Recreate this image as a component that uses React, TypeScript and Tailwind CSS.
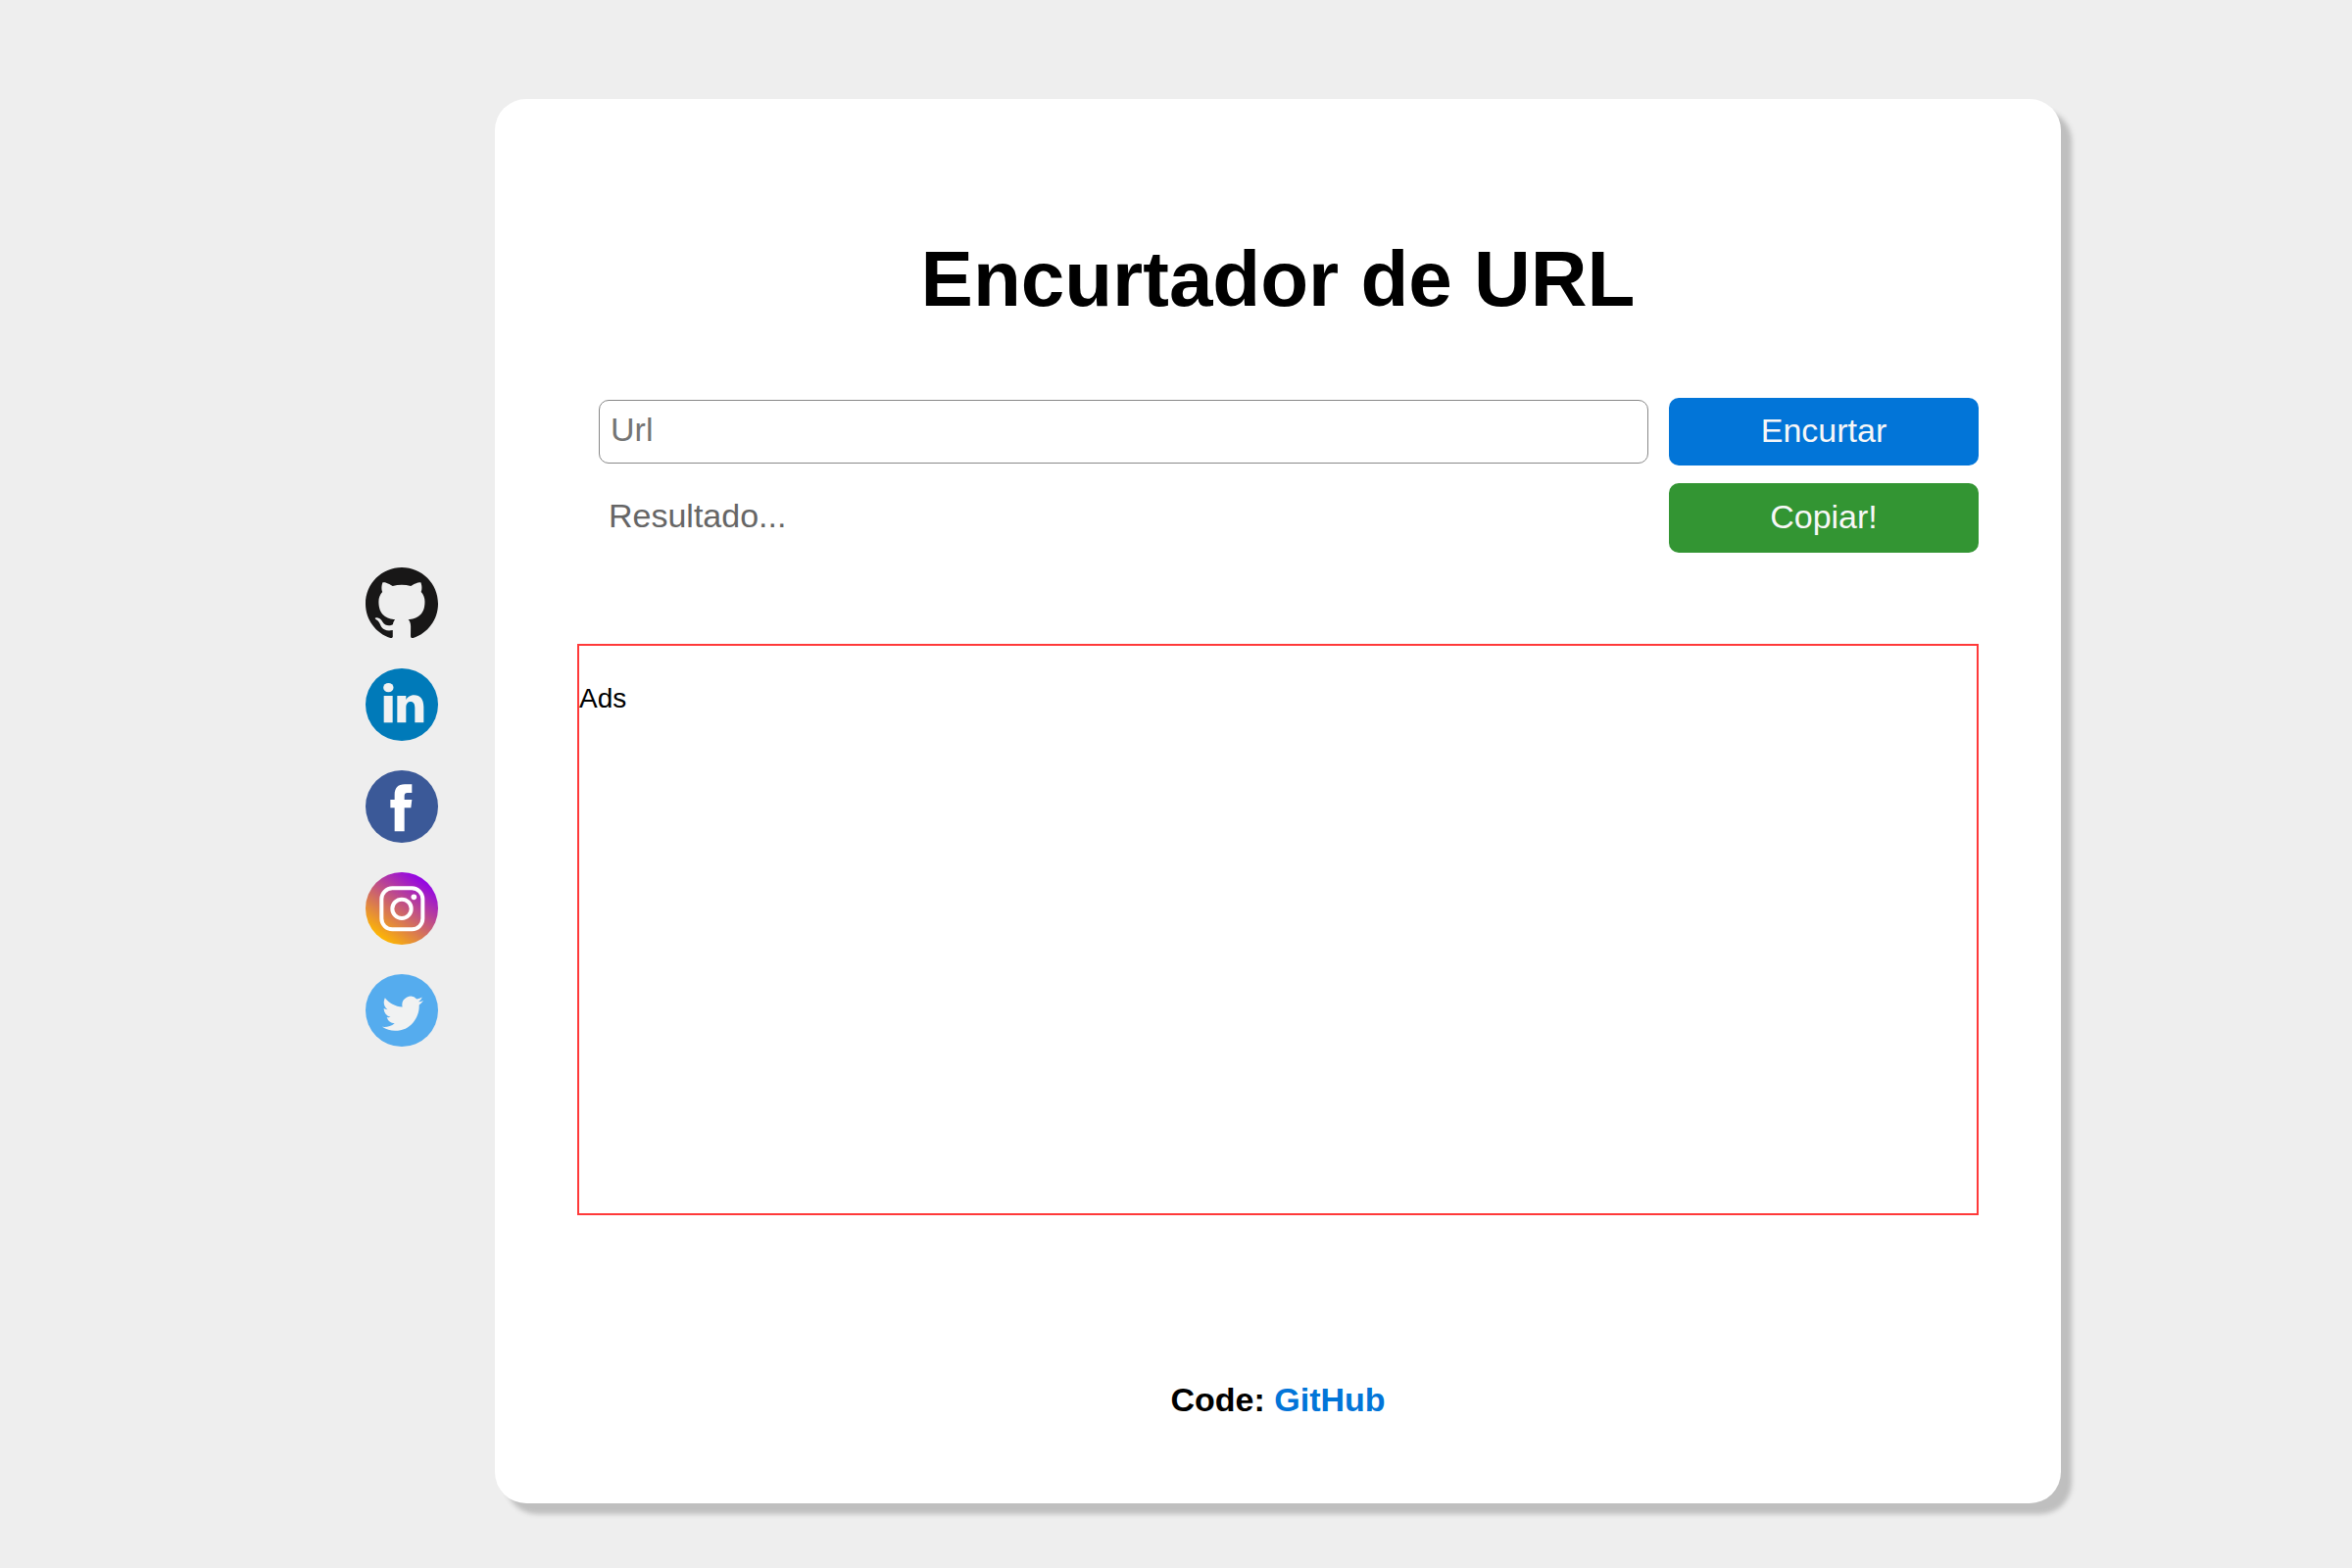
import { useState } from "react";
import type { ReactNode } from "react";

function GithubIcon() {
  return (
    <svg viewBox="0 0 24 24" className="block size-[74px]" aria-hidden="true">
      <path
        fill="#181717"
        d="M12 .297c-6.63 0-12 5.373-12 12 0 5.303 3.438 9.8 8.205 11.385.6.113.82-.258.82-.577 0-.285-.01-1.04-.015-2.04-3.338.724-4.042-1.61-4.042-1.61C4.422 18.07 3.633 17.7 3.633 17.7c-1.087-.744.084-.729.084-.729 1.205.084 1.838 1.236 1.838 1.236 1.07 1.835 2.809 1.305 3.495.998.108-.776.417-1.305.76-1.605-2.665-.3-5.466-1.332-5.466-5.93 0-1.31.465-2.38 1.235-3.22-.135-.303-.54-1.523.105-3.176 0 0 1.005-.322 3.3 1.23.96-.267 1.98-.399 3-.405 1.02.006 2.04.138 3 .405 2.28-1.552 3.285-1.23 3.285-1.23.645 1.653.24 2.873.12 3.176.765.84 1.23 1.91 1.23 3.22 0 4.61-2.805 5.625-5.475 5.92.42.36.81 1.096.81 2.22 0 1.606-.015 2.896-.015 3.286 0 .315.21.69.825.57C20.565 22.092 24 17.592 24 12.297c0-6.627-5.373-12-12-12"
      />
    </svg>
  );
}

function LinkedinIcon() {
  return (
    <svg viewBox="0 0 222 222" className="block size-[74px]" aria-hidden="true">
      <circle cx="111" cy="111" r="111" fill="#007ab9" />
      <g fill="#f1f2f2">
        <ellipse cx="70" cy="59" rx="15.5" ry="14" />
        <rect x="56" y="84" width="27" height="82" />
        <path d="M97 84h27v12c4-6 11-14 25-14 18 0 29 12 29 36v48h-27v-45c0-12-4-19-13-19-8 0-14 6-14 17v47H97z" />
      </g>
    </svg>
  );
}

function FacebookIcon() {
  return (
    <svg viewBox="0 0 222 222" className="block size-[74px]" aria-hidden="true">
      <circle cx="111" cy="111" r="111" fill="#3b5998" />
      <path
        fill="#fff"
        d="M142 43v26h-14c-6 0-9 3-9 9v12h23l-3 25h-20v72H89v-72H76V90h13V75c0-20 10-32 31-32z"
      />
    </svg>
  );
}

function InstagramIcon() {
  return (
    <svg viewBox="0 0 222 222" className="block size-[74px]" aria-hidden="true">
      <defs>
        <linearGradient id="instagram-fill" x1="0.2" y1="0.92" x2="0.8" y2="0.08">
          <stop offset="0" stopColor="#ffb900" />
          <stop offset="1" stopColor="#9100eb" />
        </linearGradient>
      </defs>
      <circle cx="111" cy="111" r="111" fill="url(#instagram-fill)" />
      <rect x="49" y="49" width="126" height="126" rx="33" fill="none" stroke="#fff" strokeWidth="12" />
      <circle cx="111" cy="112" r="29" fill="none" stroke="#fff" strokeWidth="12" />
      <circle cx="148" cy="76" r="8.5" fill="#fff" />
    </svg>
  );
}

function TwitterIcon() {
  return (
    <svg viewBox="0 0 222 222" className="block size-[74px]" aria-hidden="true">
      <circle cx="111" cy="111" r="111" fill="#55acee" />
      <path
        fill="#f1f2f2"
        transform="translate(51 56) scale(5.25 5.4)"
        d="M23.953 4.57a10 10 0 01-2.825.775 4.958 4.958 0 002.163-2.723c-.951.555-2.005.959-3.127 1.184a4.92 4.92 0 00-8.384 4.482C7.69 8.095 4.067 6.13 1.64 3.162a4.822 4.822 0 00-.666 2.475c0 1.71.87 3.213 2.188 4.096a4.904 4.904 0 01-2.228-.616v.06a4.923 4.923 0 003.946 4.827 4.996 4.996 0 01-2.212.085 4.936 4.936 0 004.604 3.417 9.867 9.867 0 01-6.102 2.105c-.39 0-.779-.023-1.17-.067a13.995 13.995 0 007.557 2.209c9.053 0 13.998-7.496 13.998-13.985 0-.21 0-.42-.015-.63A9.935 9.935 0 0024 4.59z"
      />
    </svg>
  );
}

const socials: { name: string; icon: ReactNode }[] = [
  { name: "GitHub", icon: <GithubIcon /> },
  { name: "LinkedIn", icon: <LinkedinIcon /> },
  { name: "Facebook", icon: <FacebookIcon /> },
  { name: "Instagram", icon: <InstagramIcon /> },
  { name: "Twitter", icon: <TwitterIcon /> },
];

export default function App() {
  const [url, setUrl] = useState("");

  return (
    <div className="flex min-h-screen items-center gap-[58px] bg-[#eeeeee] pt-[101px] pr-[297px] pb-[66px] pl-[373px] font-['Liberation_Sans',Arial,sans-serif] text-black">
      <nav aria-label="Redes sociais" className="flex shrink-0 flex-col gap-[30px] pt-[11px]">
        {socials.map((s) => (
          <a key={s.name} href="#" aria-label={s.name} className="block rounded-full">
            {s.icon}
          </a>
        ))}
      </nav>

      <main className="min-w-0 flex-1 rounded-[32px] bg-white px-[84px] pt-[138px] pb-[86px] shadow-[11px_11px_5px_#bfbfbf]">
        <h1 className="text-center text-[80px] leading-[92px] font-bold">Encurtador de URL</h1>

        <form
          className="mt-[75px] grid grid-cols-[1fr_316px] items-center gap-x-[21px] gap-y-[18px] pl-[22px] text-[34px] leading-[40px]"
          onSubmit={(e) => e.preventDefault()}
        >
          <input
            type="text"
            aria-label="Url"
            placeholder="Url"
            value={url}
            onChange={(e) => setUrl(e.target.value)}
            className="h-[65px] w-full rounded-[10px] border border-[#888888] bg-white px-[11px] pb-[4px] placeholder:text-[#757575]"
          />
          <button type="submit" className="h-[69px] rounded-[10px] bg-[#0275d8] pb-[4px] text-[#f7f7f7]">
            Encurtar
          </button>
          <input
            type="text"
            aria-label="Resultado"
            placeholder="Resultado..."
            readOnly
            className="h-[65px] w-full bg-white px-[10px] pb-[4px] placeholder:text-[#666666]"
          />
          <button type="button" className="h-[71px] rounded-[10px] bg-[#339533] pb-[4px] text-[#f7f7f7]">
            Copiar!
          </button>
        </form>

        <section className="mt-[93px] min-h-[583px] border-2 border-[#ff3a3a] pt-[38px]">
          <p className="text-[28px] leading-[32px]">Ads</p>
        </section>

        <footer className="mt-[168px] text-center text-[34px] leading-[40px] font-bold">
          Code:{" "}
          <a href="#" className="text-[#0275d8]">
            GitHub
          </a>
        </footer>
      </main>
    </div>
  );
}
